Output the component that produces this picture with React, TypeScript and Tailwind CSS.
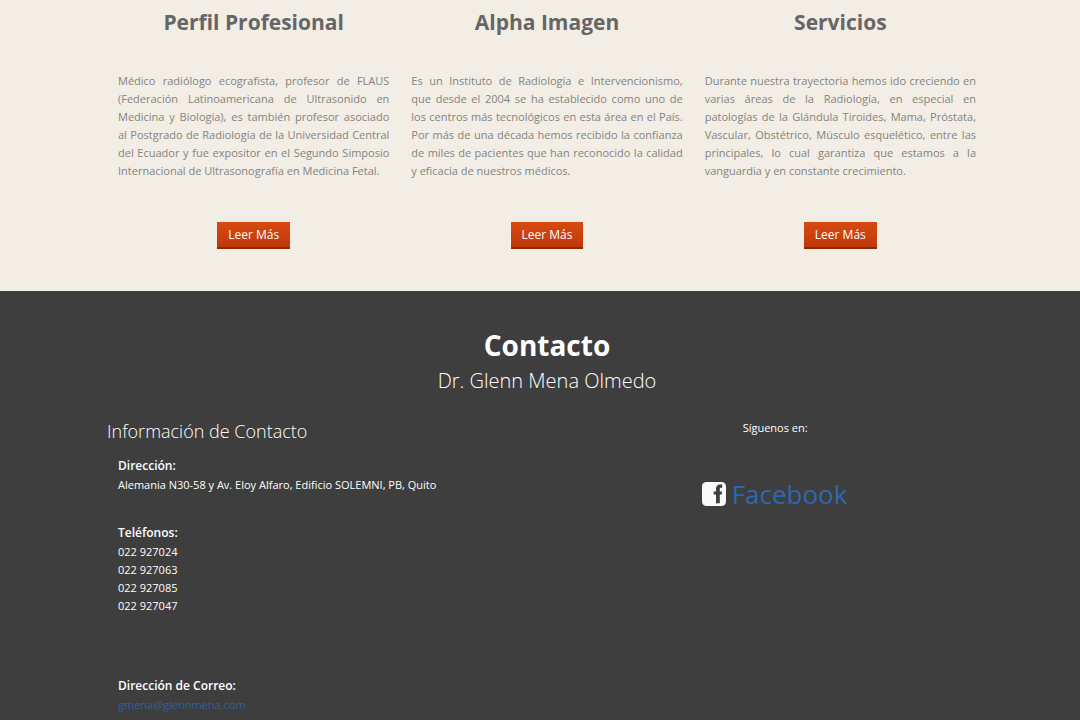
import React from "react";

const SERVICES = [
  {
    title: "Perfil Profesional",
    text: "Médico radiólogo ecografista, profesor de FLAUS (Federación Latinoamericana de Ultrasonido en Medicina y Biología), es también profesor asociado al Postgrado de Radiología de la Universidad Central del Ecuador y fue expositor en el Segundo Simposio Internacional de Ultrasonografía en Medicina Fetal.",
  },
  {
    title: "Alpha Imagen",
    text: "Es un Instituto de Radiología e Intervencionismo, que desde el 2004 se ha establecido como uno de los centros más tecnológicos en esta área en el País. Por más de una década hemos recibido la confianza de miles de pacientes que han reconocido la calidad y eficacia de nuestros médicos.",
  },
  {
    title: "Servicios",
    text: "Durante nuestra trayectoria hemos ido creciendo en varias áreas de la Radiología, en especial en patologías de la Glándula Tiroides, Mama, Próstata, Vascular, Obstétrico, Músculo esquelético, entre las principales, lo cual garantiza que estamos a la vanguardia y en constante crecimiento.",
  },
];

const PHONES = ["022 927024", "022 927063", "022 927085", "022 927047"];

function FacebookIcon() {
  return (
    <svg className="h-6 w-6 shrink-0" viewBox="0 0 24 24" aria-hidden="true">
      <rect width="24" height="24" rx="4.5" fill="#fafafa" />
      <path
        d="M14 21.3V12.6h-2.4V9.4H14V7c0-3.1 1.4-4.6 4-4.6h2.2v3.3h-1.4c-.7 0-1 .4-1 1.2v2.5H20l-.3 3.2h-1.9v8.7z"
        fill="#3e3e3e"
      />
    </svg>
  );
}

export default function App() {
  return (
    <div className="min-h-screen bg-[#3e3e3e] font-['Open_Sans',sans-serif] text-[11px] leading-[18px]">
      {/* Servicios */}
      <section className="bg-[#f2ede5] pt-[7px] pb-[42px] pl-[14px]">
        <div className="mx-auto grid max-w-[880px] grid-cols-3">
          {SERVICES.map((service) => (
            <div key={service.title} className="flex flex-col items-center px-[11px]">
              <h2 className="text-[21px] leading-[30px] font-bold text-[#666666]">{service.title}</h2>
              <p className="mt-[35px] text-justify text-[#858480]">{service.text}</p>
              <button
                type="button"
                className="mt-[42px] h-[27px] border-b-2 border-[#8c2a08] bg-linear-to-b from-[#d84910] to-[#bf390c] px-[11px] pt-px text-xs font-medium text-white"
              >
                Leer Más
              </button>
            </div>
          ))}
        </div>
      </section>

      {/* Contacto */}
      <section className="pt-[34px] pl-[14px] text-white">
        <div className="mx-auto max-w-[880px]">
          <header className="text-center">
            <h2 className="text-[28px] leading-10 font-bold">Contacto</h2>
            <p className="text-xl leading-[32px] font-light">Dr. Glenn Mena Olmedo</p>
          </header>

          <div className="mt-5 grid grid-cols-3">
            <div className="col-span-2">
              <h3 className="text-lg leading-[28px] font-light">Información de Contacto</h3>
              <div className="mt-3 pl-[11px]">
                <h4 className="mb-px text-xs leading-[18px] font-semibold">Dirección:</h4>
                <p>Alemania N30-58 y Av. Eloy Alfaro, Edificio SOLEMNI, PB, Quito</p>
                <h4 className="mt-[30px] mb-px text-xs leading-[18px] font-semibold">Teléfonos:</h4>
                <ul>
                  {PHONES.map((phone) => (
                    <li key={phone}>{phone}</li>
                  ))}
                </ul>
                <h4 className="mt-[62px] mb-px text-xs leading-[18px] font-semibold">Dirección de Correo:</h4>
                <a href="mailto:gmena@glennmena.com" className="block text-[#2f5f9b]">
                  gmena@glennmena.com
                </a>
              </div>
            </div>

            <div className="pt-0.5">
              <p className="pl-[49px]">Síguenos en:</p>
              <a href="#facebook" className="mt-[37px] ml-2 flex items-center gap-1.5 text-[26px] leading-[40px] text-[#2c68ae]">
                <FacebookIcon />
                Facebook
              </a>
            </div>
          </div>
        </div>
      </section>
    </div>
  );
}
